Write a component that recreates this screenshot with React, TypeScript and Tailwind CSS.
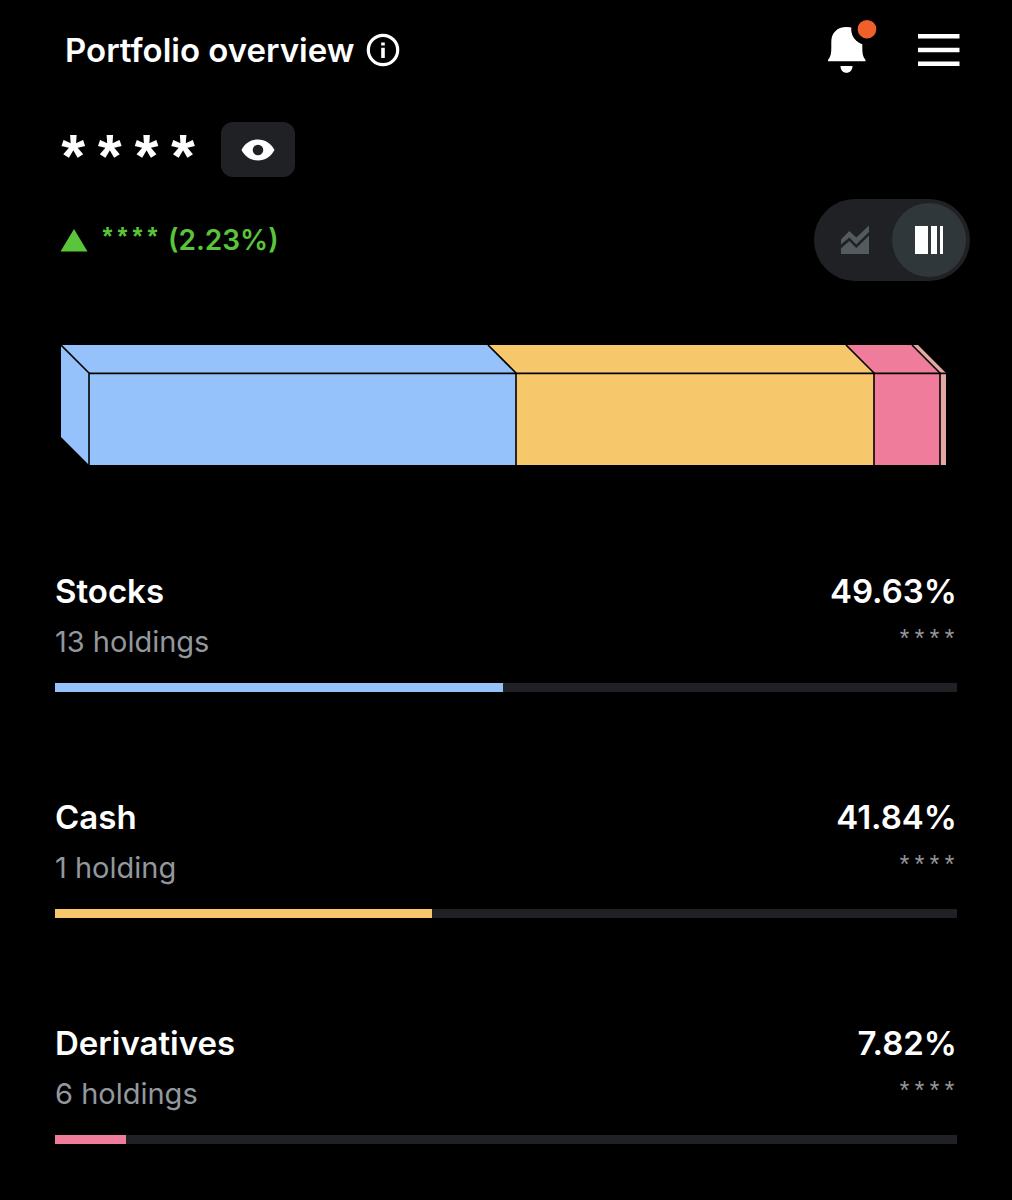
// Portfolio overview: masked balance, allocation block chart and one row per asset class.

import { useState } from "react";

const HOLDINGS = [
  { name: "Stocks", count: "13 holdings", share: 49.63, color: "bg-[#95c2fb]" },
  { name: "Cash", count: "1 holding", share: 41.84, color: "bg-[#f6c76b]" },
  { name: "Derivatives", count: "6 holdings", share: 7.82, color: "bg-[#f07c9b]" },
];

// start and end of each block on the front face
const BLOCKS = [
  { from: 28, to: 455, fill: "#95c2fb" },
  { from: 455, to: 813, fill: "#f6c76b" },
  { from: 813, to: 879, fill: "#f07c9b" },
  { from: 879, to: 885, fill: "#e5a9a4" },
];

function Header() {
  return (
    <header className="-mr-[3px] flex items-center justify-between pl-[10px]">
      <div className="flex items-center gap-3">
        <h1 className="text-[33px] leading-10 font-semibold">Portfolio overview</h1>
        <button type="button" aria-label="About this page">
          <svg className="size-[34px]" viewBox="0 0 34 34" fill="none">
            <circle cx="17" cy="17" r="14.7" stroke="white" strokeWidth="3.2" />
            <path d="M15.2 9.4h3.6v3.2h-3.6zM15.2 14.8h3.6v10.2h-3.6z" fill="white" />
          </svg>
        </button>
      </div>
      <div className="flex items-center gap-10">
        <button type="button" aria-label="Notifications">
          <svg className="h-14 w-[52px] overflow-visible" viewBox="0 0 52 56">
            <path
              d="M20.500 5C11 5 5.300 11 5.300 20v6c0 5-.6 9-3.300 12v1.200h37.500V38c-2.700-3-3.200-7-3.200-12v-6C36.300 11 30 5 20.500 5zM14.500 44h12c0 4-2.600 6.800-6 6.800s-6-2.800-6-6.800z"
              fill="white"
            />
            <circle cx="41" cy="7.200" r="15.800" fill="black" />
            <circle cx="41" cy="7.200" r="9.300" fill="#f0602b" />
          </svg>
        </button>
        <button type="button" aria-label="Menu">
          <svg className="h-8 w-[42px]" viewBox="0 0 42 32" fill="white">
            <path d="M0 0h41.500v4.600H0zM0 13.700h41.500v4.600H0zM0 27.400h41.500V32H0z" />
          </svg>
        </button>
      </div>
    </header>
  );
}

function AllocationChart() {
  return (
    <svg className="block w-full" viewBox="0 0 885 120" role="img" aria-label="Allocation by asset class">
      <path d="M0 0l28 28v92L0 92z" fill="#95c2fb" />
      {BLOCKS.map((b) => (
        <g key={b.from} fill={b.fill}>
          <path d={`M${b.from - 28} 0H${b.to - 28}L${b.to} 28H${b.from}z`} />
          <path d={`M${b.from} 28H${b.to}V120H${b.from}z`} />
        </g>
      ))}
      <g stroke="black" strokeWidth="1.600" fill="none">
        <path d="M28 28.400H885" />
        {BLOCKS.map((b) => (
          <path key={b.from} d={`M${b.from - 28} 0l28 28v92`} />
        ))}
      </g>
    </svg>
  );
}

function HoldingRow({ name, count, share, color }: (typeof HOLDINGS)[number]) {
  return (
    <li>
      <div className="flex justify-between text-[33px] leading-[50px] font-semibold">
        <h2>{name}</h2>
        <span>{share}%</span>
      </div>
      <div className="flex justify-between text-[29px] leading-[52px] text-[#92989d]">
        <span>{count}</span>
        <span className="font-['Liberation_Mono',monospace] text-[25px]">****</span>
      </div>
      <div className="mt-[15px] h-[9px] bg-[#202124]">
        <div className={`h-full ${color}`} style={{ width: `${share}%` }} />
      </div>
    </li>
  );
}

export default function App() {
  const [view, setView] = useState("blocks");

  return (
    <div className="min-h-screen bg-black px-[55px] pt-[22px] pb-14 font-['Inter',sans-serif] text-white">
      <Header />

      <div className="mt-11 flex h-[55px] items-center gap-5">
        <span className="h-14 font-['Liberation_Mono',monospace] text-[61px] leading-[82px] font-bold">****</span>
        <button
          type="button"
          aria-label="Show amounts"
          className="flex h-[55px] w-[74px] items-center justify-center rounded-xl bg-[#202124]"
        >
          <svg className="h-[22px] w-[34px]" viewBox="0 0 34 22">
            <path
              fill="white"
              fillRule="evenodd"
              d="M.5 11C4 4.300 10 .500 17 .500S30 4.300 33.500 11C30 17.700 24 21.500 17 21.500S4 17.700.5 11zM17 5.700a5.300 5.300 0 1 0 0 10.600 5.300 5.300 0 0 0 0-10.600z"
            />
          </svg>
        </button>
      </div>

      <div className="-mr-[13px] mt-[22px] flex items-center justify-between pl-[5px]">
        <div className="flex items-center text-[28px] leading-10 font-semibold text-[#5ac53a]">
          <svg className="h-6 w-7" viewBox="0 0 28 24" fill="currentColor">
            <path d="M14 1l13.500 22.500H.5z" />
          </svg>
          <span className="ml-3 font-['Liberation_Mono',monospace] text-[25px]">****</span>
          <span className="ml-2">(2.23%)</span>
        </div>
        <div className="flex h-[82px] w-[156px] items-center rounded-full bg-[#202124] p-1">
          <button
            type="button"
            aria-label="Line view"
            aria-pressed={view === "line"}
            onClick={() => setView("line")}
            className="flex size-[74px] items-center justify-center rounded-full text-[#535b5f] aria-pressed:bg-[#30373a] aria-pressed:text-white"
          >
            <svg className="size-7" viewBox="0 0 28 28" fill="currentColor">
              <path d="M0 13.500L8.300 5l7 6.500L28 -.5V6L15.300 18.500 8.300 11.500 0 18.500z" />
              <path d="M0 22.500l8.300-7.500 7 7L28 9.500V28H0z" />
            </svg>
          </button>
          <button
            type="button"
            aria-label="Block view"
            aria-pressed={view === "blocks"}
            onClick={() => setView("blocks")}
            className="flex size-[74px] items-center justify-center rounded-full text-[#535b5f] aria-pressed:bg-[#30373a] aria-pressed:text-white"
          >
            <svg className="size-7" viewBox="0 0 28 28" fill="currentColor">
              <path d="M0 0h13v28H0zM16 0h6v28h-6zM25 0h3v28h-3z" />
            </svg>
          </button>
        </div>
      </div>

      <div className="mt-16 pr-[11px] pl-[6px]">
        <AllocationChart />
      </div>

      <ul className="mt-[101px] flex flex-col gap-[100px]">
        {HOLDINGS.map((h) => (
          <HoldingRow key={h.name} {...h} />
        ))}
      </ul>
    </div>
  );
}
